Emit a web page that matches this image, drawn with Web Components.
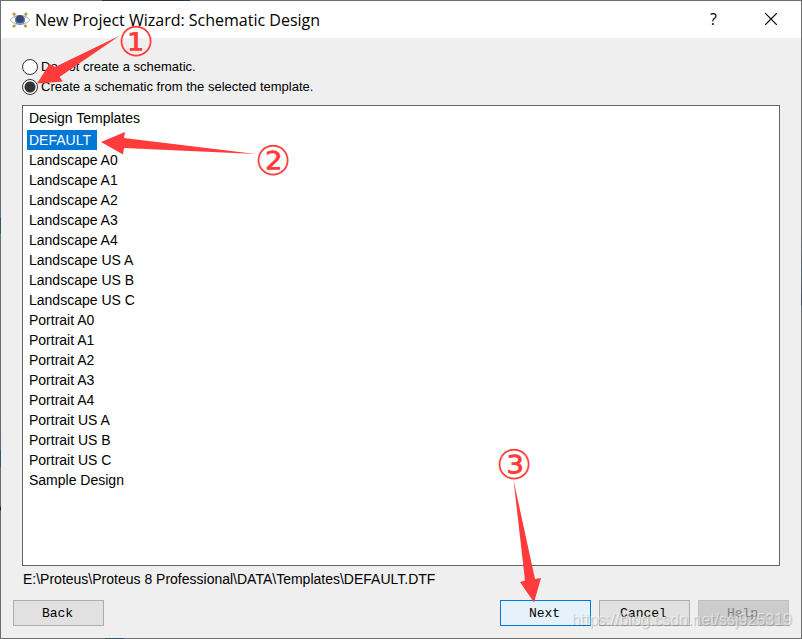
<!DOCTYPE html>
<html lang="en">
<head>
<meta charset="utf-8">
<title>New Project Wizard: Schematic Design</title>
<style>
  body {
    margin: 0;
    min-height: 100vh;
    display: flex;
    background: #6e6e6e;
    font-family: "Liberation Sans", Arial, sans-serif;
  }
</style>
</head>
<body>
<wizard-window>
  <title-bar slot="title">New Project Wizard: Schematic Design</title-bar>
  <schematic-choice></schematic-choice>
  <template-list heading="Design Templates">
    <template-item selected>DEFAULT</template-item>
    <template-item>Landscape A0</template-item>
    <template-item>Landscape A1</template-item>
    <template-item>Landscape A2</template-item>
    <template-item>Landscape A3</template-item>
    <template-item>Landscape A4</template-item>
    <template-item>Landscape US A</template-item>
    <template-item>Landscape US B</template-item>
    <template-item>Landscape US C</template-item>
    <template-item>Portrait A0</template-item>
    <template-item>Portrait A1</template-item>
    <template-item>Portrait A2</template-item>
    <template-item>Portrait A3</template-item>
    <template-item>Portrait A4</template-item>
    <template-item>Portrait US A</template-item>
    <template-item>Portrait US B</template-item>
    <template-item>Portrait US C</template-item>
    <template-item>Sample Design</template-item>
  </template-list>
  <file-path>E:\Proteus\Proteus 8 Professional\DATA\Templates\DEFAULT.DTF</file-path>
  <push-button slot="back">Back</push-button>
  <push-button slot="actions" primary>Next</push-button>
  <push-button slot="actions">Cancel</push-button>
  <push-button slot="actions" disabled>Help</push-button>
  <guide-marks slot="overlay"></guide-marks>
  <water-mark slot="overlay">https://blog.csdn.net/ssj925319</water-mark>
</wizard-window>

<script>
// Base class: attaches an open shadow root and renders once
class BaseElement extends HTMLElement {
  constructor() {
    super();
    this.attachShadow({ mode: 'open' });
  }

  connectedCallback() {
    this.shadowRoot.innerHTML = this.template();
    this.ready();
  }

  template() {
    return '';
  }

  ready() {}
}

// Dialog frame with title, content, and button row
class WizardWindow extends BaseElement {
  template() {
    return `
      <style>
        :host {
          position: relative;
          display: flex;
          flex: 1;
          box-sizing: border-box;
          padding: 1px;
          /* desktop showing through the thin window edge */
          background:
            linear-gradient(#243746, #243746) 102px 0 / 88px 1px no-repeat,
            linear-gradient(#345668, #345668) 105px 100% / 19px 1px no-repeat,
            linear-gradient(#6e6e6e 0 170px, #5b6d80 217px, #2f5767 218px 233px, #6e6e6e 234px 400px, #56687c 450px, #2f5767 452px 467px, #6e6e6e 468px 506px, #222 507px 510px, #6e6e6e 511px) 0 0 / 1px 100% no-repeat,
            linear-gradient(#6e6e6e 0 230px, #4d5f70 290px, #3a4d5a 305px, #6e6e6e 306px) 100% 0 / 1px 100% no-repeat,
            #6e6e6e;
        }
        .frame {
          flex: 1;
          display: flex;
          flex-direction: column;
          background: #efefef;
        }
        main {
          flex: 1;
          display: flex;
          flex-direction: column;
          padding: 19px 21px 8px;
        }
        footer {
          display: flex;
          justify-content: space-between;
          padding: 4px 12px 12px;
        }
        .actions {
          display: flex;
          gap: 8px;
        }
      </style>
      <div class="frame">
        <slot name="title"></slot>
        <main><slot></slot></main>
        <footer>
          <slot name="back"></slot>
          <div class="actions"><slot name="actions"></slot></div>
        </footer>
      </div>
      <slot name="overlay"></slot>
    `;
  }
}

class TitleBar extends BaseElement {
  template() {
    return `
      <style>
        :host {
          display: flex;
          align-items: center;
          height: 37px;
          padding-left: 8px;
          background: #fff;
          color: #000;
          font-family: "Open Sans", "Noto Sans", sans-serif;
        }
        h1 {
          flex: 1;
          margin: 0 0 0 4px;
          font-size: 16px;
          font-weight: 400;
          line-height: 20px;
        }
        button {
          display: grid;
          place-items: center;
          width: 57px;
          height: 37px;
          padding: 0 0 2px;
          border: 0;
          background: none;
          color: #000;
          font: 16px "Open Sans", "Noto Sans", sans-serif;
        }
        button:last-child { margin-right: 2px; }
      </style>
      <svg width="22" height="18" viewBox="0 0 22 18" aria-hidden="true">
        <g fill="none" stroke="#b0b0b6" stroke-width="1">
          <ellipse cx="11" cy="9" rx="9.500" ry="4"/>
          <path d="M5 3Q9 4 11 9Q14 14 17 15M17 3Q13 4 11 9Q8 14 5 15M5 3Q5 7 8 10M17 3Q17 7 14 10"/>
        </g>
        <circle cx="11" cy="9" r="5" fill="#4a74b4"/>
        <circle cx="11" cy="8" r="3.800" fill="#34496b"/>
        <path d="M8 12Q11 14 14 12" stroke="#84abe0" fill="none"/>
        <g fill="#c09450">
          <circle cx="5" cy="3" r="1.600"/><circle cx="17" cy="3" r="1.600"/>
          <circle cx="5" cy="15" r="1.600"/><circle cx="16.500" cy="15" r="1.600"/>
        </g>
      </svg>
      <h1><slot></slot></h1>
      <button type="button" aria-label="Help">?</button>
      <button type="button" aria-label="Close">
        <svg width="12" height="12" viewBox="0 0 12 12" aria-hidden="true">
          <path d="M0 0L12 12M12 0L0 12" stroke="#000" stroke-width="1.200"/>
        </svg>
      </button>
    `;
  }
}

// Both radios share one shadow root so that they form one group
class SchematicChoice extends BaseElement {
  template() {
    return `
      <style>
        :host {
          display: block;
          margin-bottom: 8px;
          font-size: 13px;
          line-height: 20px;
        }
        fieldset {
          margin: 0;
          padding: 0;
          border: 0;
        }
        label {
          display: flex;
          align-items: center;
          gap: 3px;
        }
        input {
          appearance: none;
          box-sizing: border-box;
          width: 16px;
          height: 16px;
          margin: 0;
          border: 1px solid #333;
          border-radius: 50%;
          background: #fff;
        }
        input:checked {
          background: radial-gradient(circle, #333 5px, #fff 6px);
        }
      </style>
      <fieldset aria-label="Schematic">
        <label><input type="radio" name="schematic" value="none">Do not create a schematic.</label>
        <label><input type="radio" name="schematic" value="template" checked>Create a schematic from the selected template.</label>
      </fieldset>
    `;
  }
}

class TemplateList extends BaseElement {
  template() {
    return `
      <style>
        :host {
          display: block;
          flex: 1;
          box-sizing: border-box;
          padding: 2px 4px;
          border: 1px solid #646464;
          background: #fff;
          font-size: 14px;
          line-height: 20px;
        }
        .heading { padding: 0 2px 2px; }
      </style>
      <div class="heading" id="heading">${this.getAttribute('heading')}</div>
      <div role="listbox" aria-labelledby="heading"><slot></slot></div>
    `;
  }

  ready() {
    this.addEventListener('click', (event) => {
      const item = event.target.closest('template-item');
      if (!item) return;
      this.querySelectorAll('template-item').forEach((el) => {
        el.toggleAttribute('selected', el === item);
        el.setAttribute('aria-selected', String(el === item));
      });
    });
  }
}

class TemplateItem extends BaseElement {
  template() {
    return `
      <style>
        :host {
          display: block;
          width: fit-content;
          padding: 0 6px 0 2px;
          color: #000;
          cursor: default;
        }
        :host([selected]) {
          background: #0078d7;
          color: #fff;
        }
      </style>
      <slot></slot>
    `;
  }

  ready() {
    this.setAttribute('role', 'option');
    this.setAttribute('aria-selected', String(this.hasAttribute('selected')));
    this.tabIndex = this.hasAttribute('selected') ? 0 : -1;
  }
}

class FilePath extends BaseElement {
  template() {
    return `
      <style>
        :host {
          display: block;
          padding: 4px 1px 0;
          font-size: 14px;
          line-height: 18px;
        }
      </style>
      <slot></slot>
    `;
  }
}

class PushButton extends BaseElement {
  template() {
    return `
      <style>
        :host { display: block; }
        button {
          display: block;
          width: 91px;
          height: 26px;
          padding: 0 2px 0 0;
          border: 1px solid #adadad;
          background: #e1e1e1;
          color: #000;
          font: 13px "Liberation Mono", monospace;
        }
        :host([primary]) button {
          border-color: #0078d7;
          background: #e5f1fb;
        }
        button:disabled {
          border-color: #bfbfbf;
          background: #ccc;
          color: #838383;
        }
      </style>
      <button type="button" ${this.hasAttribute('disabled') ? 'disabled' : ''}><slot></slot></button>
    `;
  }
}

// Numbered arrows drawn over the dialog
class GuideMarks extends BaseElement {
  template() {
    return `
      <style>
        :host {
          position: absolute;
          inset: 0;
          pointer-events: none;
          color: #ff3b3b;
        }
        svg {
          position: absolute;
          left: 0;
          top: 0;
          overflow: visible;
        }
        span {
          position: absolute;
          width: 32px;
          height: 32px;
          font: 41px/32px "DejaVu Sans", sans-serif;
          display: flex;
          justify-content: center;
        }
        .one { left: 120px; top: 26px; }
        .two { left: 257px; top: 145px; }
        .three { left: 498px; top: 449px; }
      </style>
      <svg width="802" height="639" viewBox="0 0 802 639" fill="currentColor" aria-hidden="true">
        <path d="M37 83.500L49.500 64L55 67L120 35.500L59.500 77L63 81.500Z"/>
        <path d="M101 142L125 132L124 138L256 154L124 148L123 154.500Z"/>
        <path d="M513.500 480L535 579L541 578L534 602.500L520 582L525 580.500Z"/>
      </svg>
      <span class="one">①</span>
      <span class="two">②</span>
      <span class="three">③</span>
    `;
  }
}

class WaterMark extends BaseElement {
  template() {
    return `
      <style>
        :host {
          position: absolute;
          right: 10px;
          bottom: 9px;
          color: rgba(255, 255, 255, 0.5);
          font-size: 16px;
          line-height: 20px;
          text-shadow: 1px 1px 1px rgba(0, 0, 0, 0.2);
          pointer-events: none;
        }
      </style>
      <slot></slot>
    `;
  }
}

customElements.define('wizard-window', WizardWindow);
customElements.define('title-bar', TitleBar);
customElements.define('schematic-choice', SchematicChoice);
customElements.define('template-list', TemplateList);
customElements.define('template-item', TemplateItem);
customElements.define('file-path', FilePath);
customElements.define('push-button', PushButton);
customElements.define('guide-marks', GuideMarks);
customElements.define('water-mark', WaterMark);
</script>
</body>
</html>
